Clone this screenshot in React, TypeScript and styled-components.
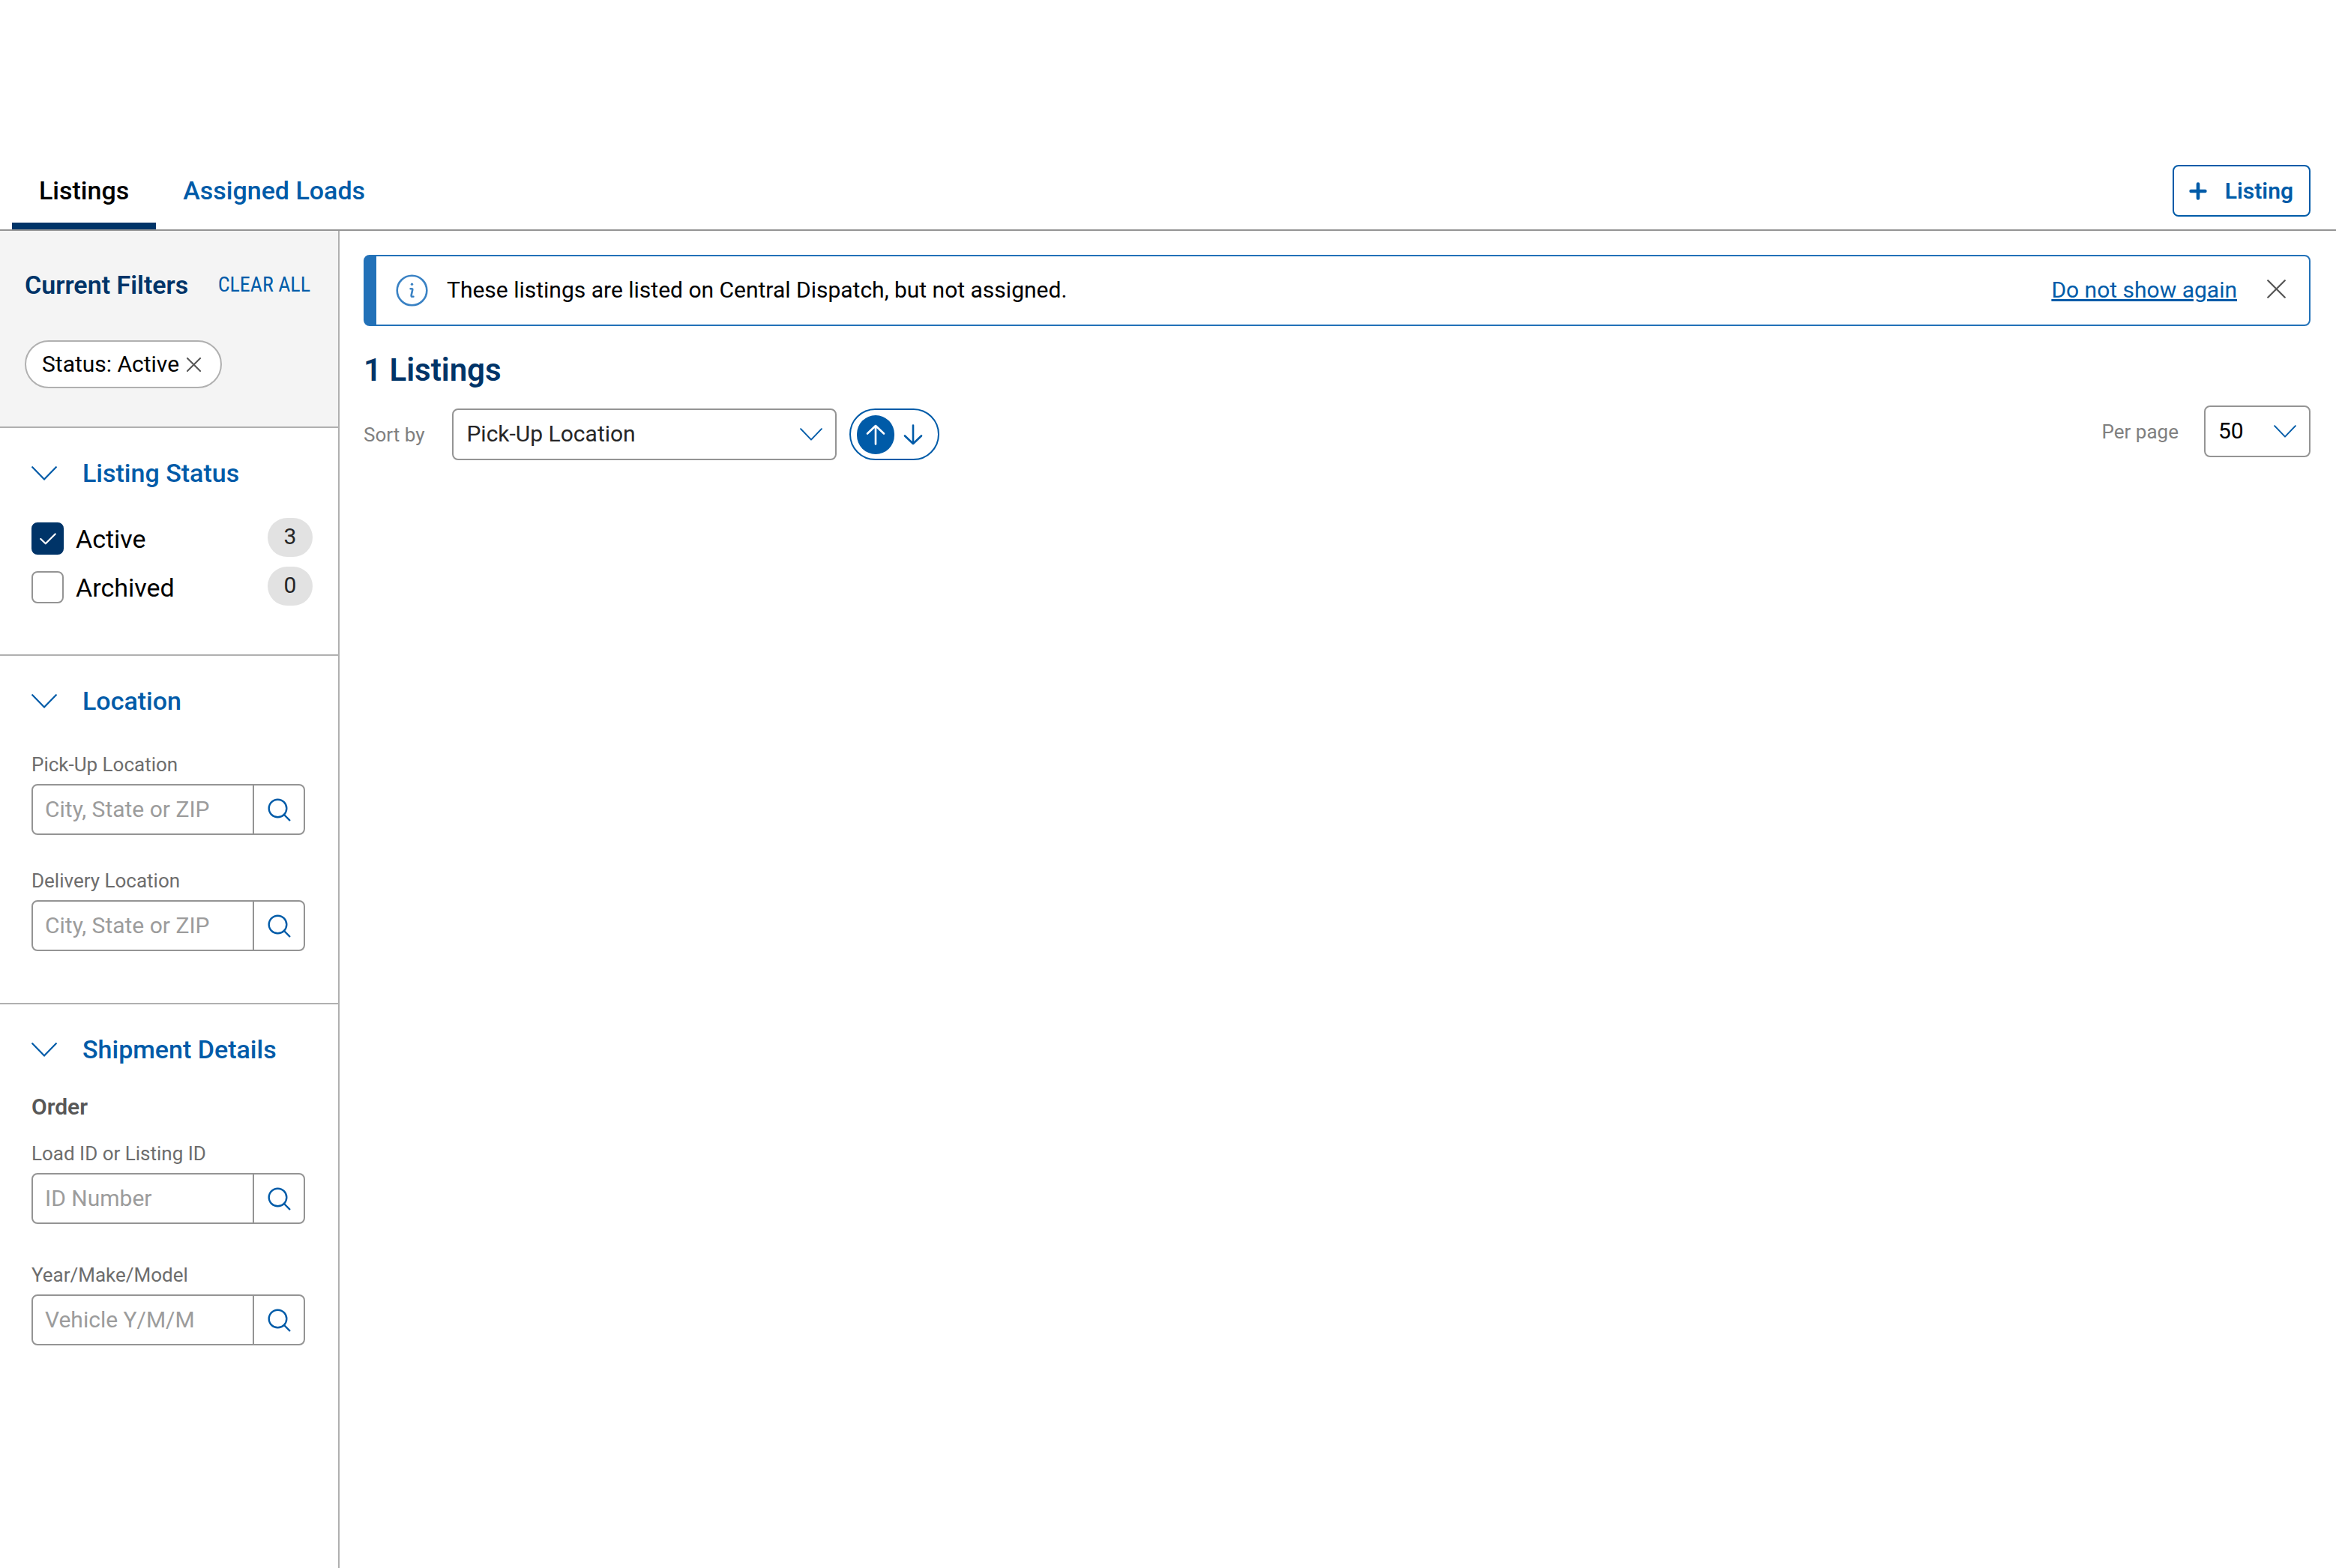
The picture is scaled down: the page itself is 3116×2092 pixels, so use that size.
import React, { useState } from "react";
import styled, { createGlobalStyle } from "styled-components";

const color = {
  navy: "#003468",
  blue: "#005ba8",
  info: "#2271b8",
  line: "#b0b0b0",
  field: "#949494",
  label: "#6d6d6d",
  placeholder: "#9c9c9c",
  ink: "#262626",
};

const GlobalStyle = createGlobalStyle`
  *, *::before, *::after { box-sizing: border-box; }
  html, body { margin: 0; }
  body, button, input, select {
    font-family: Roboto, "Liberation Sans", sans-serif;
  }
  body { background: #fff; color: #000; font-size: 30px; line-height: 40px; }
  button, input, select { font-size: inherit; line-height: inherit; color: inherit; margin: 0; }
  button { padding: 0; border: 0; background: none; cursor: pointer; }
  svg { display: block; flex: none; fill: none; stroke: currentColor; stroke-linecap: round; stroke-linejoin: round; }
  h1, h2, h3, p { margin: 0; }
`;

const Page = styled.div`
  display: flex;
  flex-direction: column;
  min-height: 100vh;
`;

const Header = styled.header`
  display: flex;
  align-items: flex-end;
  justify-content: space-between;
  padding: 212px 34px 0 16px;
  border-bottom: 2px solid ${color.field};
`;

const Tabs = styled.nav`
  display: flex;
`;

const Tab = styled.a<{ $active?: boolean }>`
  display: flex;
  align-items: center;
  height: 94px;
  padding: 0 36px 2px;
  border-bottom: 9px solid ${(p) => (p.$active ? color.navy : "transparent")};
  color: ${(p) => (p.$active ? "#000" : color.blue)};
  font-size: 34px;
  font-weight: 500;
  text-decoration: none;
`;

const AddButton = styled.button`
  display: flex;
  align-items: center;
  justify-content: space-between;
  width: 184px;
  height: 69px;
  margin-bottom: 17px;
  padding: 0 21px 0 20px;
  border: 2px solid ${color.blue};
  border-radius: 8px;
  color: ${color.blue};
  font-weight: 600;
`;

const Body = styled.div`
  display: flex;
  flex: 1;
`;

const Sidebar = styled.aside`
  flex: none;
  width: 453px;
  border-right: 2px solid ${color.line};
`;

const CurrentFilters = styled.section`
  height: 263px;
  padding: 52px 37px 0 33px;
  border-bottom: 2px solid ${color.line};
  background: #f4f4f4;
`;

const FiltersHead = styled.div`
  display: flex;
  align-items: center;
  justify-content: space-between;
  margin-bottom: 54px;
`;

const FiltersTitle = styled.h2`
  color: ${color.navy};
  font-size: 34px;
  font-weight: 600;
  line-height: 40px;
`;

const ClearButton = styled.button`
  color: ${color.blue};
  font-family: "Roboto Condensed", Roboto, sans-serif;
  font-size: 28px;
`;

const Chip = styled.span`
  display: inline-flex;
  align-items: center;
  gap: 10px;
  height: 64px;
  padding: 0 26px 0 21px;
  border: 2px solid ${color.line};
  border-radius: 32px;
  background: #fff;
`;

const IconButton = styled.button`
  display: grid;
  place-items: center;
  color: #585858;
`;

const CloseButton = styled(IconButton)`
  padding-bottom: 4px;
`;

const Section = styled.section`
  padding: 40px 34px 65px 42px;
  & + & {
    border-top: 2px solid ${color.line};
  }
`;

const SectionToggle = styled.button`
  display: flex;
  align-items: center;
  gap: 34px;
  color: ${color.blue};
  font-size: 34px;
  font-weight: 500;
`;

const CheckList = styled.div`
  display: grid;
  gap: 13px;
  margin-top: 40px;
`;

const CheckRow = styled.div`
  display: flex;
  align-items: center;
  justify-content: space-between;
`;

const CheckLabel = styled.label`
  display: flex;
  align-items: center;
  gap: 16px;
  padding-top: 3px;
  font-size: 34px;
`;

const CheckBox = styled.span`
  display: grid;
  place-items: center;
  color: #fff;
  > * {
    grid-area: 1 / 1;
  }
  svg {
    pointer-events: none;
  }
`;

const CheckInput = styled.input`
  appearance: none;
  width: 43px;
  height: 43px;
  border: 2px solid ${color.field};
  border-radius: 8px;
  background: #fff;
  &:checked {
    border-color: ${color.navy};
    background: ${color.navy};
  }
`;

const Count = styled.span`
  width: 60px;
  height: 52px;
  border-radius: 26px;
  background: #e2e2e2;
  color: ${color.ink};
  line-height: 50px;
  text-align: center;
`;

const Fields = styled.div<{ $top: number; $gap: number }>`
  display: grid;
  grid-template-columns: minmax(0, 1fr);
  gap: ${(p) => p.$gap}px;
  margin-top: ${(p) => p.$top}px;
  padding: 0 10px 4px 0;
`;

const FieldLabel = styled.label`
  display: block;
  margin-bottom: 6px;
  color: ${color.label};
  font-size: 26px;
`;

const SearchBox = styled.div`
  display: flex;
  height: 68px;
  border: 2px solid ${color.field};
  border-radius: 8px;
`;

const SearchInput = styled.input`
  flex: 1;
  min-width: 0;
  padding: 0 0 0 16px;
  border: 0;
  background: none;
  outline: 0;
  &::placeholder {
    color: ${color.placeholder};
    opacity: 1;
  }
`;

const SearchButton = styled.button`
  display: grid;
  flex: none;
  place-items: center;
  width: 68px;
  border-left: 2px solid ${color.field};
  color: ${color.blue};
`;

const GroupTitle = styled.h3`
  margin-top: 37px;
  color: #585858;
  font-size: 30px;
  font-weight: 600;
  line-height: 40px;
`;

const Main = styled.main`
  flex: 1;
  min-width: 0;
  padding: 32px 34px 32px 32px;
`;

const Banner = styled.div`
  display: flex;
  align-items: center;
  height: 95px;
  padding: 0 31px 0 26px;
  border: 2px solid ${color.info};
  border-left-width: 17px;
  border-radius: 8px;
  > svg {
    color: #3a82c4;
  }
`;

const BannerText = styled.p`
  flex: 1;
  padding: 0 0 2px 25px;
`;

const BannerLink = styled.a`
  margin-right: 40px;
  padding-bottom: 2px;
  color: ${color.blue};
`;

const ListingsTitle = styled.h1`
  margin-top: 33px;
  color: ${color.navy};
  font-size: 42px;
  font-weight: 600;
  line-height: 52px;
`;

const Toolbar = styled.div`
  display: flex;
  align-items: flex-start;
  justify-content: space-between;
  margin-top: 21px;
`;

const ToolGroup = styled.div`
  display: flex;
  align-items: center;
`;

const SortGroup = styled(ToolGroup)`
  padding-top: 4px;
`;

const ToolLabel = styled.label<{ $space: number }>`
  margin-right: ${(p) => p.$space}px;
  color: #808080;
  font-size: 26px;
`;

const SelectWrap = styled.span<{ $width: number }>`
  display: grid;
  align-items: center;
  justify-items: end;
  width: ${(p) => p.$width}px;
  color: ${color.blue};
  > * {
    grid-area: 1 / 1;
  }
  svg {
    margin-right: 19px;
    pointer-events: none;
  }
`;

const Select = styled.select<{ $ink: string }>`
  appearance: none;
  width: 100%;
  height: 69px;
  padding: 0 60px 1px 17px;
  border: 2px solid ${color.field};
  border-radius: 8px;
  background: #fff;
  color: ${(p) => p.$ink};
`;

const Direction = styled.div`
  display: flex;
  align-items: center;
  width: 120px;
  height: 69px;
  margin-left: 17px;
  padding-left: 8px;
  border: 2px solid ${color.blue};
  border-radius: 35px;
`;

const DirectionButton = styled.button<{ $on: boolean }>`
  display: grid;
  place-items: center;
  width: 50px;
  height: 52px;
  border-radius: 26px;
  background: ${(p) => (p.$on ? color.blue : "none")};
  color: ${(p) => (p.$on ? "#fff" : color.blue)};
`;

const Chevron = ({ width = 34 }: { width?: number }) => (
  <svg width={width} height={width / 2 + 2} viewBox="0 0 34 19" strokeWidth="2.2">
    <path d="M1.2 1.2 L17 17.6 L32.8 1.2" />
  </svg>
);

const Cross = ({ size }: { size: number }) => (
  <svg width={size} height={size} viewBox="0 0 24 24" strokeWidth={size > 20 ? 2.2 : 2.6}>
    <path d="M1.2 1.2 L22.8 22.8 M22.8 1.2 L1.2 22.8" />
  </svg>
);

const SearchIcon = () => (
  <svg width="31" height="31" viewBox="0 0 31 31" strokeWidth="2.4">
    <circle cx="13.5" cy="13.5" r="11.8" />
    <path d="M22 22 L29.3 29.3" />
  </svg>
);

const InfoIcon = () => (
  <svg width="43" height="43" viewBox="0 0 43 43" strokeWidth="2.6">
    <circle cx="21.5" cy="21.5" r="19.8" />
    <circle cx="21.5" cy="13.3" r="1.7" fill="currentColor" stroke="none" />
    <path d="M19.6 19.2 H21 Q22.6 19.2 22.2 20.8 L20.7 27.6 Q20.3 29.8 22 29.8 H23.4" />
  </svg>
);

const Arrow = ({ down }: { down?: boolean }) => (
  <svg width="26" height="28" viewBox="0 0 26 28" strokeWidth="2.6">
    <path d={down ? "M13 1.5 V26 M2 15.5 L13 26 L24 15.5" : "M13 26.5 V2 M2 12.5 L13 2 L24 12.5"} />
  </svg>
);

const Plus = () => (
  <svg width="24" height="24" viewBox="0 0 24 24" strokeWidth="4.6">
    <path d="M12 2.6 V21.4 M2.6 12 H21.4" />
  </svg>
);

const Tick = () => (
  <svg width="22" height="16" viewBox="0 0 22 16" strokeWidth="2.2">
    <path d="M1.3 8 L7.8 14.3 L20.7 1.5" />
  </svg>
);

type FieldProps = { id: string; label: string; placeholder: string };

const SearchField = ({ id, label, placeholder }: FieldProps) => (
  <div>
    <FieldLabel htmlFor={id}>{label}</FieldLabel>
    <SearchBox>
      <SearchInput id={id} type="text" placeholder={placeholder} />
      <SearchButton type="button" aria-label={`Search ${label}`}>
        <SearchIcon />
      </SearchButton>
    </SearchBox>
  </div>
);

type StatusProps = { id: string; label: string; count: number; initial: boolean };

const StatusOption = ({ id, label, count, initial }: StatusProps) => {
  const [checked, setChecked] = useState(initial);
  return (
    <CheckRow>
      <CheckLabel htmlFor={id}>
        <CheckBox>
          <CheckInput
            id={id}
            type="checkbox"
            checked={checked}
            onChange={(e) => setChecked(e.target.checked)}
          />
          {checked && <Tick />}
        </CheckBox>
        {label}
      </CheckLabel>
      <Count>{count}</Count>
    </CheckRow>
  );
};

const SectionHeading = ({ children }: { children: string }) => (
  <SectionToggle type="button" aria-expanded="true">
    <Chevron />
    {children}
  </SectionToggle>
);

export default function App() {
  const [ascending, setAscending] = useState(true);

  return (
    <Page>
      <GlobalStyle />
      <Header>
        <Tabs>
          <Tab href="#listings" $active>
            Listings
          </Tab>
          <Tab href="#assigned">Assigned Loads</Tab>
        </Tabs>
        <AddButton type="button">
          <Plus />
          Listing
        </AddButton>
      </Header>
      <Body>
        <Sidebar>
          <CurrentFilters>
            <FiltersHead>
              <FiltersTitle>Current Filters</FiltersTitle>
              <ClearButton type="button">CLEAR ALL</ClearButton>
            </FiltersHead>
            <Chip>
              Status: Active
              <IconButton type="button" aria-label="Remove filter">
                <Cross size={19} />
              </IconButton>
            </Chip>
          </CurrentFilters>
          <Section>
            <SectionHeading>Listing Status</SectionHeading>
            <CheckList>
              <StatusOption id="status-active" label="Active" count={3} initial />
              <StatusOption id="status-archived" label="Archived" count={0} initial={false} />
            </CheckList>
          </Section>
          <Section>
            <SectionHeading>Location</SectionHeading>
            <Fields $top={45} $gap={41}>
              <SearchField id="pickup" label="Pick-Up Location" placeholder="City, State or ZIP" />
              <SearchField id="delivery" label="Delivery Location" placeholder="City, State or ZIP" />
            </Fields>
          </Section>
          <Section>
            <SectionHeading>Shipment Details</SectionHeading>
            <GroupTitle>Order</GroupTitle>
            <Fields $top={22} $gap={48}>
              <SearchField id="load-id" label="Load ID or Listing ID" placeholder="ID Number" />
              <SearchField id="vehicle" label="Year/Make/Model" placeholder="Vehicle Y/M/M" />
            </Fields>
          </Section>
        </Sidebar>
        <Main>
          <Banner>
            <InfoIcon />
            <BannerText>These listings are listed on Central Dispatch, but not assigned.</BannerText>
            <BannerLink href="#dismiss">Do not show again</BannerLink>
            <CloseButton type="button" aria-label="Close">
              <Cross size={25} />
            </CloseButton>
          </Banner>
          <ListingsTitle>1 Listings</ListingsTitle>
          <Toolbar>
            <SortGroup>
              <ToolLabel htmlFor="sort" $space={37}>
                Sort by
              </ToolLabel>
              <SelectWrap $width={513}>
                <Select id="sort" defaultValue="pickup" $ink={color.ink}>
                  <option value="pickup">Pick-Up Location</option>
                  <option value="delivery">Delivery Location</option>
                </Select>
                <Chevron width={30} />
              </SelectWrap>
              <Direction>
                <DirectionButton
                  type="button"
                  aria-label="Ascending"
                  $on={ascending}
                  onClick={() => setAscending(true)}
                >
                  <Arrow />
                </DirectionButton>
                <DirectionButton
                  type="button"
                  aria-label="Descending"
                  $on={!ascending}
                  onClick={() => setAscending(false)}
                >
                  <Arrow down />
                </DirectionButton>
              </Direction>
            </SortGroup>
            <ToolGroup>
              <ToolLabel htmlFor="per-page" $space={34}>
                Per page
              </ToolLabel>
              <SelectWrap $width={142}>
                <Select id="per-page" defaultValue="50" $ink="#000">
                  <option>25</option>
                  <option>50</option>
                  <option>100</option>
                </Select>
                <Chevron width={30} />
              </SelectWrap>
            </ToolGroup>
          </Toolbar>
        </Main>
      </Body>
    </Page>
  );
}
